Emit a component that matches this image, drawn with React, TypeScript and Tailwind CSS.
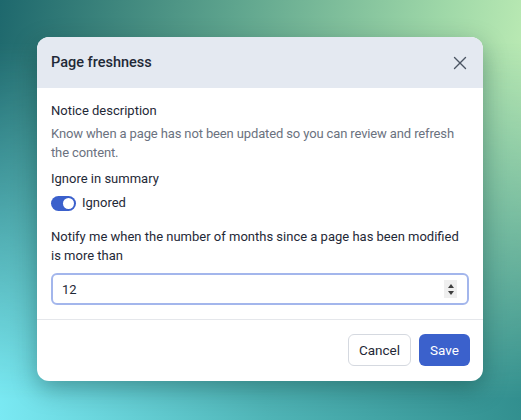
import React from 'react';
import { X } from 'lucide-react';

const App: React.FC = () => {
  return (
    <div className="relative h-[420px] w-full overflow-hidden font-['Roboto',sans-serif] bg-[linear-gradient(100deg,#1e686d_0%,#5fa58e_40%,#9fd8a8_75%,#cdf6bb_100%)]">
      {/* bottom half of the background blends toward cyan / teal */}
      <div className="absolute inset-0 bg-[linear-gradient(80deg,#7ae9f3_0%,#4fb4b6_45%,#2a8584_100%)] [mask-image:linear-gradient(to_bottom,transparent_10%,black_95%)]" />

      {/* page text peeking out below the dialog */}
      <div className="absolute left-[90px] top-[372px] text-[14px] leading-[20px] text-[#1f2937] [clip-path:inset(0_0_11px_0)]">
        Pages with medium
      </div>

      <div className="relative pl-[37px] pt-[37px]">
        <div className="w-[446px] overflow-hidden rounded-xl bg-white shadow-[0_8px_24px_rgba(0,40,40,0.35)]">
          {/* Header */}
          <div className="flex h-[51px] items-center justify-between bg-[#e4e9f1] pl-[14px] pr-[12px]">
            <h2 className="text-[14.5px] font-medium text-[#1f2937]">Page freshness</h2>
            <button className="text-[#4b5563]">
              <X size={22} strokeWidth={1.5} />
            </button>
          </div>

          {/* Body */}
          <div className="px-[14px] pt-[13px] pb-[14px] text-[13px]">
            <div className="leading-[20px] text-[#1f2937]">Notice description</div>
            <p className="mt-[3px] leading-[19px] tracking-[-0.01em] text-[#6b7280]">
              Know when a page has not been updated so you can review and refresh the content.
            </p>

            <div className="mt-[7px] leading-[20px] text-[#1f2937]">Ignore in summary</div>
            <div className="mt-[4px] flex h-[20px] items-center gap-[6px]">
              <span className="relative inline-flex h-[15px] w-[25px] items-center rounded-full bg-[#3b60cc]">
                <span className="absolute right-[2px] h-[11px] w-[11px] rounded-full bg-white" />
              </span>
              <span className="leading-[20px] text-[#1f2937]">Ignored</span>
            </div>

            <div className="mt-[14px] leading-[19px] text-[#1f2937]">
              Notify me when the number of months since a page has been modified is more than
            </div>
            <div className="mt-[8px] flex h-[32px] items-center rounded-md border-2 border-[#a3b6ec] pl-[9px] pr-[10px]">
              <input
                type="text"
                defaultValue="12"
                className="h-full w-full bg-transparent text-[13px] text-[#1f2937] outline-none"
              />
              <span className="flex h-[18px] w-[13px] shrink-0 flex-col items-center justify-center gap-[3px] bg-[#efefef]">
                <span className="h-0 w-0 border-x-[3px] border-b-[4px] border-x-transparent border-b-[#3f3f3f]" />
                <span className="h-0 w-0 border-x-[3px] border-t-[4px] border-x-transparent border-t-[#3f3f3f]" />
              </span>
            </div>
          </div>

          {/* Footer */}
          <div className="flex justify-end gap-[8px] border-t border-[#e5e7eb] px-[13px] pt-[14px] pb-[15px]">
            <button className="h-[32px] w-[63px] rounded-md border border-[#d5d9e0] bg-white text-[13.5px] text-[#1f2937]">
              Cancel
            </button>
            <button className="h-[32px] w-[51px] rounded-md bg-[#3b61cc] text-[13.5px] text-white">
              Save
            </button>
          </div>
        </div>
      </div>
    </div>
  );
};

export default App;
